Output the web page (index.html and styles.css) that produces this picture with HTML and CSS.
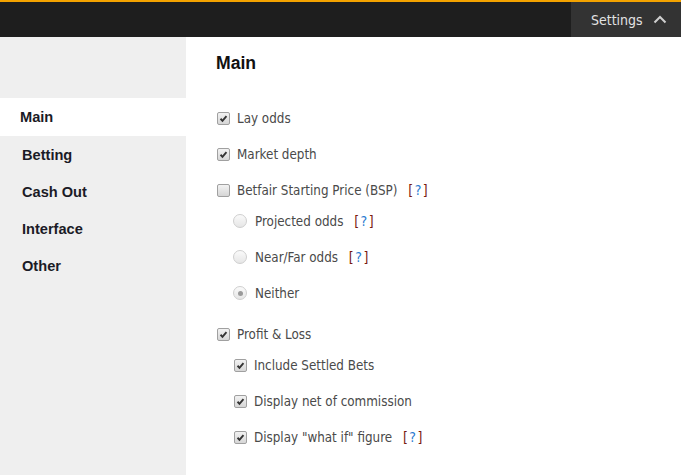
FILE: index.html
```html
<!DOCTYPE html>
<html lang="en">
<head>
  <meta charset="UTF-8">
  <title>Settings</title>
  <link rel="stylesheet" href="styles.css">
</head>
<body>
  <header class="topbar">
    <button class="settings-toggle">
      <span>Settings</span>
      <svg class="chevron" width="14" height="9" viewBox="0 0 14 9"><path d="M1.5 7.5 L7 2 L12.5 7.5" fill="none" stroke="#cfcfcf" stroke-width="2"/></svg>
    </button>
  </header>

  <div class="layout">
    <nav class="sidebar">
      <a class="nav-item active">Main</a>
      <a class="nav-item">Betting</a>
      <a class="nav-item">Cash Out</a>
      <a class="nav-item">Interface</a>
      <a class="nav-item">Other</a>
    </nav>

    <main class="panel">
      <h2>Main</h2>

      <div class="option">
        <span class="box checked"><svg viewBox="0 0 13 13"><path d="M3 6.8 L5.3 9.2 L10 3.6" fill="none" stroke="#333" stroke-width="2.2"/></svg></span>
        <span class="text">Lay odds</span>
      </div>
      <div class="option">
        <span class="box checked"><svg viewBox="0 0 13 13"><path d="M3 6.8 L5.3 9.2 L10 3.6" fill="none" stroke="#333" stroke-width="2.2"/></svg></span>
        <span class="text">Market depth</span>
      </div>
      <div class="option">
        <span class="box"></span>
        <span class="text">Betfair Starting Price (BSP) <span class="help">[<a>?</a>]</span></span>
      </div>
      <div class="sub">
        <div class="option">
          <span class="radio"></span>
          <span class="text">Projected odds <span class="help">[<a>?</a>]</span></span>
        </div>
        <div class="option">
          <span class="radio"></span>
          <span class="text">Near/Far odds <span class="help">[<a>?</a>]</span></span>
        </div>
        <div class="option">
          <span class="radio checked"></span>
          <span class="text">Neither</span>
        </div>
      </div>
      <div class="option">
        <span class="box checked"><svg viewBox="0 0 13 13"><path d="M3 6.8 L5.3 9.2 L10 3.6" fill="none" stroke="#333" stroke-width="2.2"/></svg></span>
        <span class="text">Profit &amp; Loss</span>
      </div>
      <div class="sub">
        <div class="option">
          <span class="box checked"><svg viewBox="0 0 13 13"><path d="M3 6.8 L5.3 9.2 L10 3.6" fill="none" stroke="#333" stroke-width="2.2"/></svg></span>
          <span class="text">Include Settled Bets</span>
        </div>
        <div class="option">
          <span class="box checked"><svg viewBox="0 0 13 13"><path d="M3 6.8 L5.3 9.2 L10 3.6" fill="none" stroke="#333" stroke-width="2.2"/></svg></span>
          <span class="text">Display net of commission</span>
        </div>
        <div class="option">
          <span class="box checked"><svg viewBox="0 0 13 13"><path d="M3 6.8 L5.3 9.2 L10 3.6" fill="none" stroke="#333" stroke-width="2.2"/></svg></span>
          <span class="text">Display "what if" figure <span class="help">[<a>?</a>]</span></span>
        </div>
      </div>
    </main>
  </div>
</body>
</html>
```

FILE: styles.css
```css
/* General */
body {
  margin: 0;
  font-family: "DejaVu Sans Condensed", "DejaVu Sans", sans-serif;
  background: #fff;
  height: 475px;
  overflow: hidden;
}

/* Top bar */
.topbar {
  height: 35px;
  border-top: 2px solid #f3a200;
  background: #1e1e1e;
  display: flex;
  justify-content: flex-end;
}

.settings-toggle {
  width: 110px;
  background: #333;
  border: none;
  color: #e2e2e2;
  font-family: inherit;
  font-size: 14px;
  display: flex;
  align-items: center;
  gap: 10px;
  padding: 0 0 0 20px;
}

.chevron {
  margin-top: -1px;
}

/* Layout */
.layout {
  display: flex;
  height: 438px;
}

.sidebar {
  width: 186px;
  background: #efefef;
  padding-top: 61px;
  display: flex;
  flex-direction: column;
}

.nav-item {
  height: 37px;
  line-height: 39px;
  padding-left: 22px;
  font-family: "Liberation Sans", Arial, sans-serif;
  font-weight: bold;
  font-size: 14.6px;
  color: #1b1b26;
  overflow: hidden;
}

.nav-item.active {
  background: #fff;
  height: 38px;
  line-height: 38px;
  padding-left: 20px;
}

/* Main panel */
.panel {
  flex: 1;
  padding-left: 30px;
}

.panel h2 {
  margin: 0;
  height: 63px;
  line-height: 53px;
  font-family: "Liberation Sans", Arial, sans-serif;
  font-size: 17.6px;
  color: #111;
}

.option {
  height: 36px;
  display: flex;
  align-items: center;
  font-size: 13.3px;
  color: #4a4a4a;
}

.sub {
  margin: -5px 0 5px 17px;
}

.box {
  width: 11px;
  height: 11px;
  border: 1px solid #a0a0a0;
  border-radius: 2px;
  background: linear-gradient(#f2f2f2, #d6d6d6);
  margin: 0 7px 0 1px;
  display: flex;
}

.box svg {
  width: 11px;
  height: 11px;
}

.radio {
  width: 12px;
  height: 12px;
  border: 1px solid #cfcfcf;
  border-radius: 50%;
  background: linear-gradient(#fafafa, #e6e6e6);
  margin: 0 8px 0 0;
  display: flex;
  align-items: center;
  justify-content: center;
}

.radio.checked::after {
  content: "";
  width: 5px;
  height: 5px;
  border-radius: 50%;
  background: #9a9a9a;
}

.help {
  color: #7a1a10;
  margin-left: 7px;
  font-size: 14px;
}

.help a {
  color: #2b7bd0;
  padding: 0 1.5px;
}
```
